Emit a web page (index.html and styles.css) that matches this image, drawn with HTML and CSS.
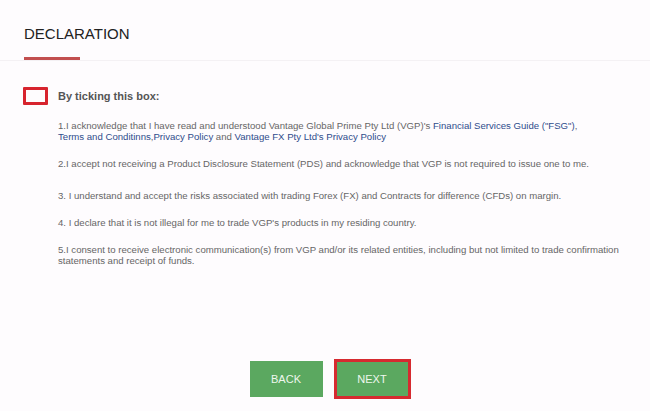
FILE: index.html
```html
<!DOCTYPE html>
<html lang="en">
    <head>
        <meta charset="utf-8">
        <link rel="stylesheet" href="styles.css">
    </head>
    <body>
        <div class="page">
            <div class="head">
                <h2 class="title">DECLARATION</h2>
            </div>
            <div class="tick">
                <span class="checkbox"></span>
                <strong>By ticking this box:</strong>
            </div>
            <div class="terms">
                <p>1.I acknowledge that I have read and understood Vantage Global Prime Pty Ltd (VGP)'s <a href="#">Financial Services Guide ("FSG")</a>,<br><a href="#">Terms and Conditinns</a>,<a href="#">Privacy Policy</a> and <a href="#">Vantage FX Pty Ltd's Privacy Policy</a></p>
                <p class="gap">2.I accept not receiving a Product Disclosure Statement (PDS) and acknowledge that VGP is not required to issue one to me.</p>
                <p>3. I understand and accept the risks associated with trading Forex (FX) and Contracts for difference (CFDs) on margin.</p>
                <p>4. I declare that it is not illegal for me to trade VGP's products in my residing country.</p>
                <p>5.I consent to receive electronic communication(s) from VGP and/or its related entities, including but not limited to trade confirmation<br>statements and receipt of funds.</p>
            </div>
            <div class="actions">
                <a href="#" class="btn">BACK</a>
                <a href="#" class="btn btn-next">NEXT</a>
            </div>
        </div>
    </body>
</html>
```

FILE: styles.css
```css
* {
    margin: 0;
    padding: 0;
}
body {
    background-color: #fefcfe;
    font-family: "Liberation Sans", Arial, sans-serif;
    color: #555;
}
a {
    text-decoration: none;
}
.page {
    width: 650px;
    height: 411px;
    display: flex;
    flex-direction: column;
}
.head {
    padding: 25px 0 0 24px;
    border-bottom: 1px solid #f4f1f4;
}
.title {
    display: inline-block;
    font-size: 15px;
    font-weight: normal;
    color: #222;
    line-height: 18px;
    padding-bottom: 14px;
    border-bottom: 3px solid #c24f4f;
    width: 56px;
    white-space: nowrap;
}
.tick {
    display: flex;
    align-items: center;
    padding: 26px 0 0 23px;
}
.checkbox {
    width: 19px;
    height: 12px;
    border: 3px solid #d7242e;
    border-radius: 1px;
    margin-right: 10px;
}
.tick strong {
    font-size: 11px;
    color: #555;
}
.terms {
    padding: 15px 0 0 58px;
}
.terms p {
    font-size: 9.6px;
    line-height: 11px;
    color: #666;
    margin-bottom: 16px;
}
.terms p.gap {
    margin-bottom: 21px;
}
.terms a {
    color: #2f4c8c;
}
.actions {
    margin-top: auto;
    margin-bottom: 12px;
    padding-left: 10px;
    display: flex;
    justify-content: center;
    gap: 11px;
}
.btn {
    width: 73px;
    height: 36px;
    line-height: 36px;
    text-align: center;
    background-color: #5ba860;
    color: #eef7ee;
    font-size: 11px;
}
.btn-next {
    width: 71px;
    height: 34px;
    line-height: 34px;
    border: 3px solid #d62a30;
    margin-top: -2px;
}
```
